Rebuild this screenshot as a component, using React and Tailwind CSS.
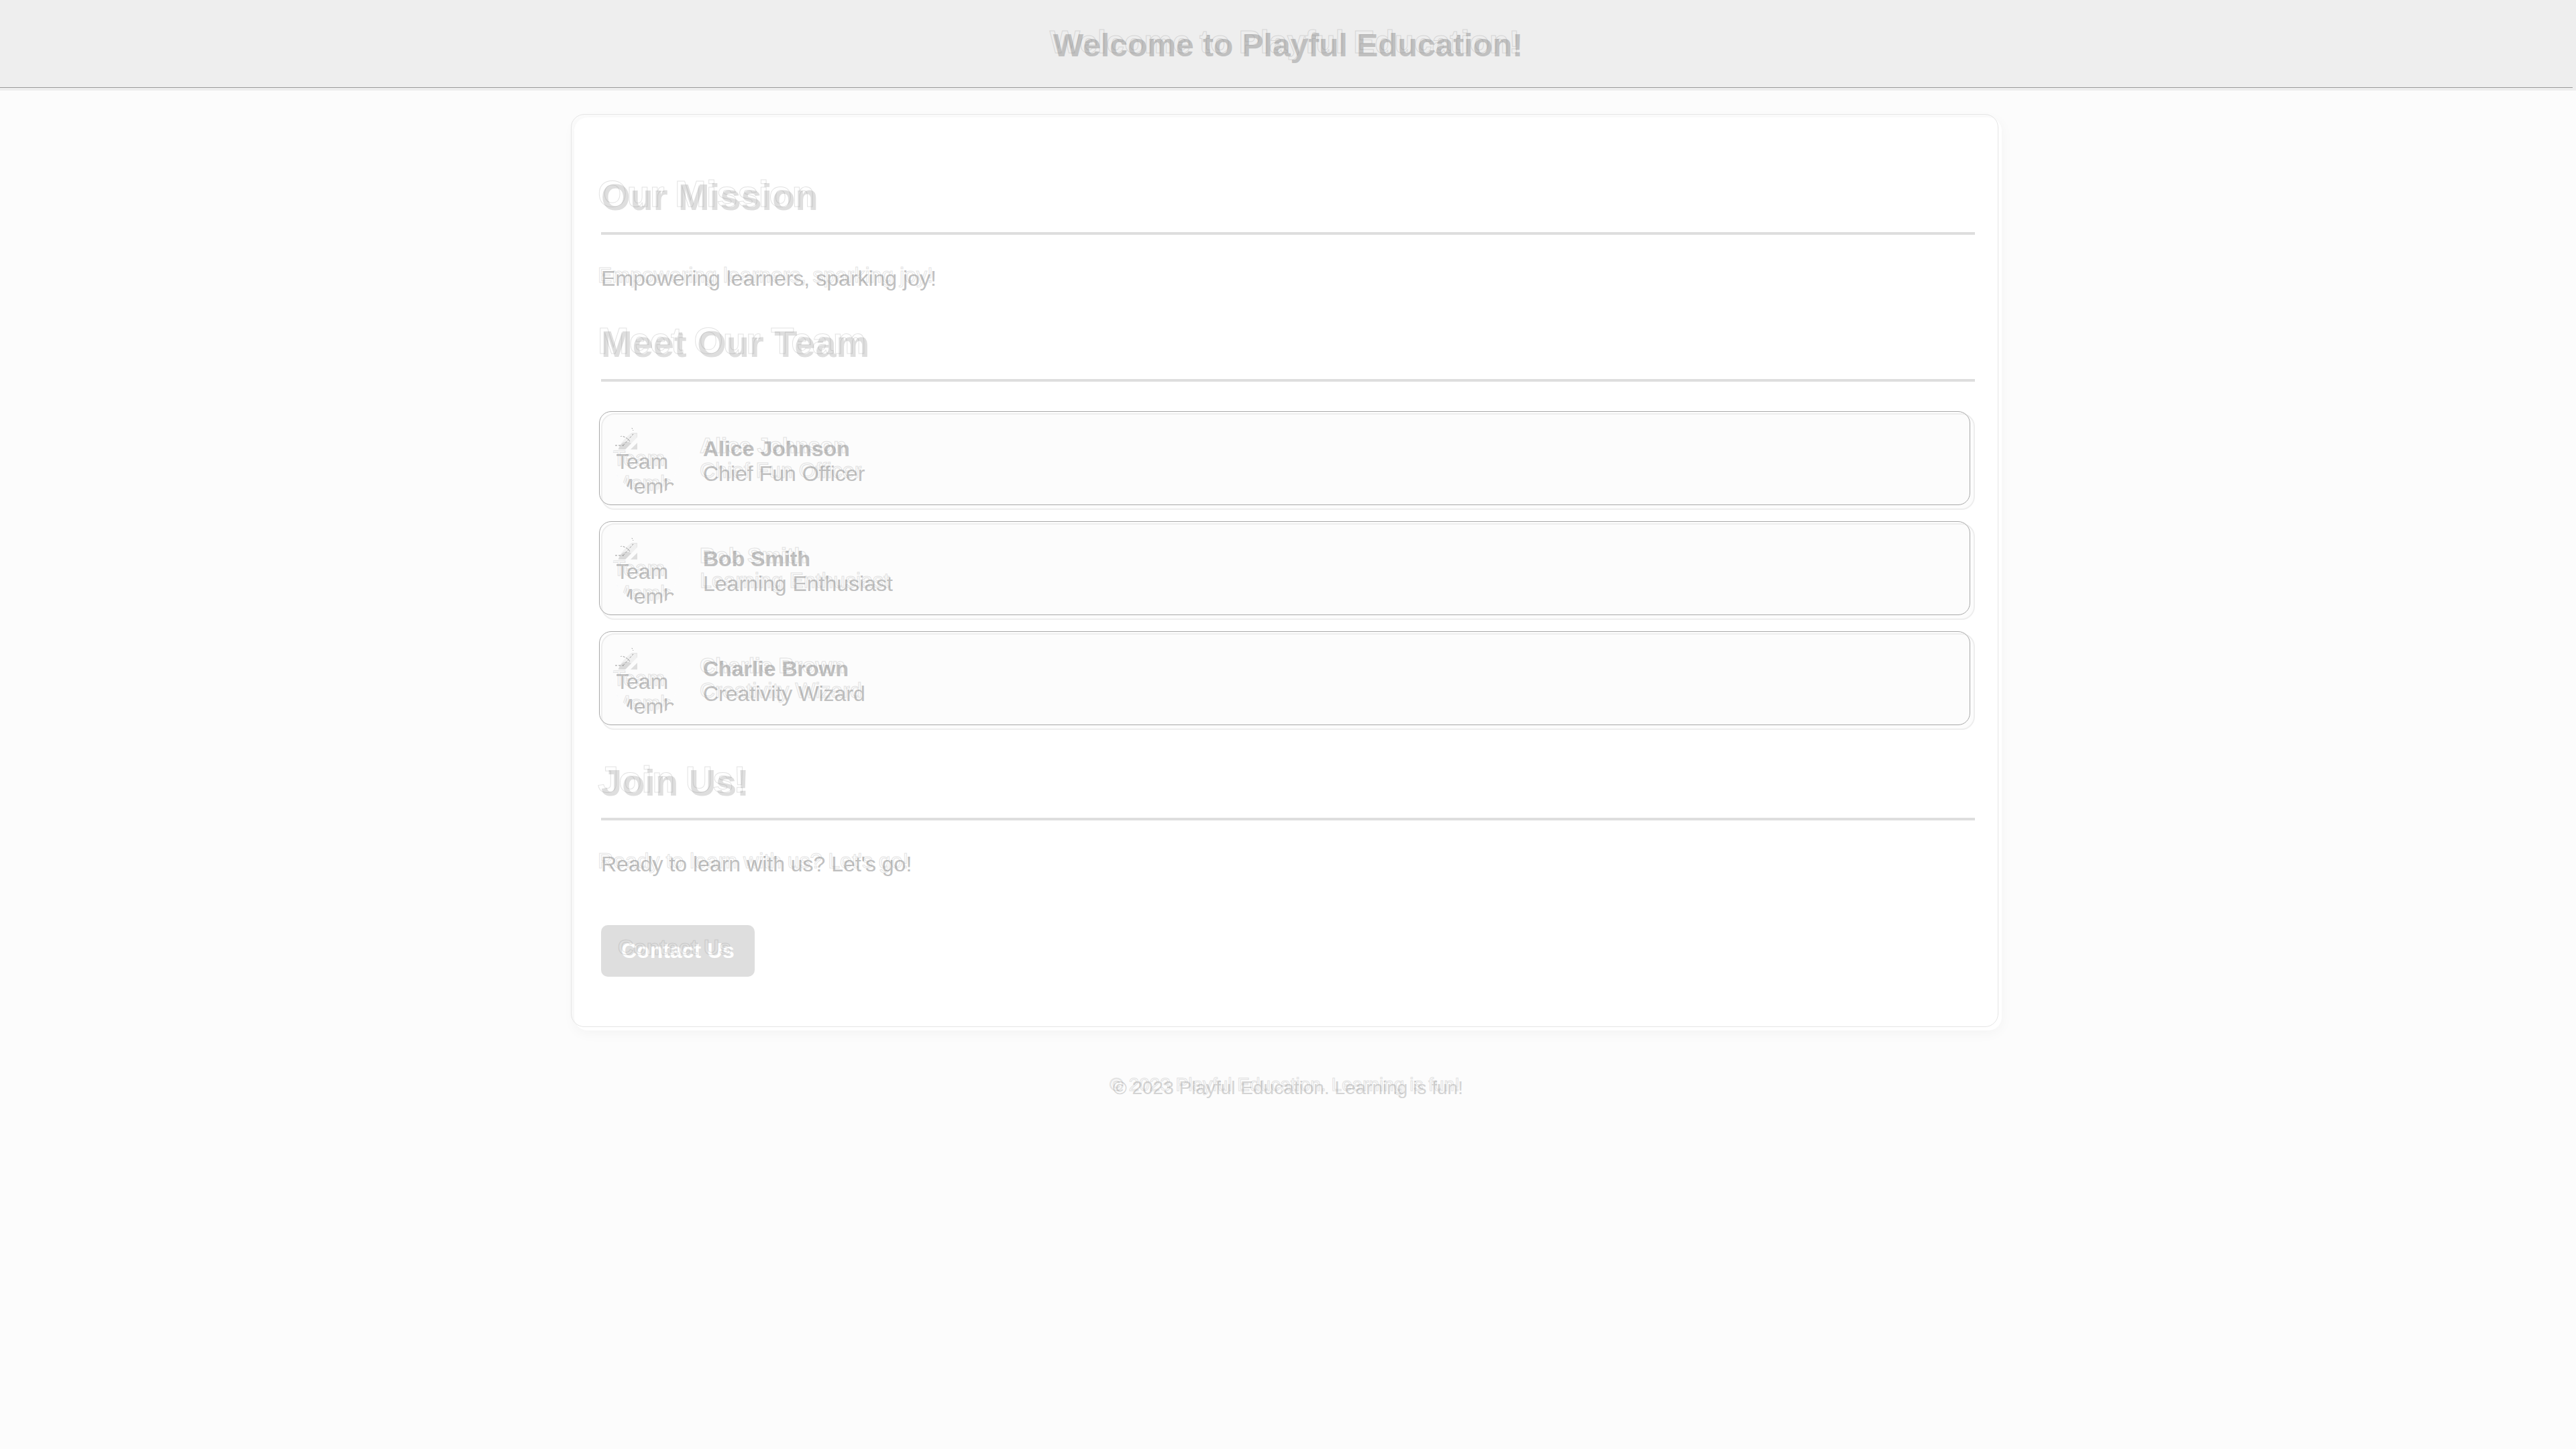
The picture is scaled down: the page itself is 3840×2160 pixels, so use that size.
const team = [
  { name: "Alice Johnson", role: "Chief Fun Officer" },
  { name: "Bob Smith", role: "Learning Enthusiast" },
  { name: "Charlie Brown", role: "Creativity Wizard" },
];

// Text with a faint engraved contour up and to the left of the letters.
function Etched({ children }) {
  return (
    <span
      data-etch={children}
      className="relative inline-block before:pointer-events-none before:absolute before:-left-[5px] before:-top-[5px] before:w-full before:text-transparent before:opacity-20 before:content-[attr(data-etch)] before:[-webkit-text-stroke:1px_#777777]"
    >
      {children}
    </span>
  );
}

function SectionTitle({ children }) {
  return (
    <h2 className="border-b-4 border-[#dedede] pb-5 text-[56px] font-bold leading-[64px] text-[#dedede]">
      <Etched>{children}</Etched>
    </h2>
  );
}

// Placeholder avatar: a torn-picture glyph over its label, clipped to a circle.
function Avatar() {
  return (
    <div className="relative size-[100px] shrink-0">
      <div role="img" aria-label="Team Member" className="size-full overflow-hidden rounded-full leading-[37px]">
        <svg viewBox="0 0 32 32" className="block size-8" aria-hidden="true">
          <path d="M0 8 H32 V14 L14 32 H0 Z" fill="#f0f0f0" />
          <path d="M4 32 C6 23 12 19 20 21 L23 23 L14 32 Z" fill="#d9d9d9" />
          <path d="M32 22 V32 H22 Z" fill="#dedede" />
          <path d="M20 8 H32 V14" fill="none" stroke="#dddddd" strokeWidth="1" />
        </svg>
        Team Member
      </div>
      <div
        aria-hidden="true"
        className="pointer-events-none absolute -left-[5px] -top-[5px] size-full overflow-hidden rounded-full leading-[37px]"
      >
        <svg viewBox="0 0 32 32" className="block size-8">
          <g fill="none" stroke="#999999" strokeWidth="1">
            <path d="M1 32 C4 19 13 9 25 2 L29 5 L31 9" strokeDasharray="2 2" />
            <path d="M6 19 C13 15 21 18 26 25 M4 31 H18 M16 31 L31 14" strokeDasharray="3 2" />
          </g>
        </svg>
        <div
          data-etch="Team Member"
          className="before:text-transparent before:opacity-20 before:content-[attr(data-etch)] before:[-webkit-text-stroke:1px_#777777]"
        />
      </div>
    </div>
  );
}

function Member({ name, role }) {
  return (
    <li className="relative flex items-center gap-[30px] rounded-[20px] border-2 border-[#eeeeee] bg-[#fcfcfc] p-5 before:pointer-events-none before:absolute before:-left-[5px] before:-top-[5px] before:h-full before:w-full before:rounded-[18px] before:border before:border-[#a8a8a8]">
      <Avatar />
      <div className="flex flex-col leading-[37px]">
        <strong className="font-bold">
          <Etched>{name}</Etched>
        </strong>
        <span>
          <Etched>{role}</Etched>
        </span>
      </div>
    </li>
  );
}

export default function App() {
  return (
    <div className="flex min-h-screen flex-col bg-[#fcfcfc] font-['Liberation_Sans',Arial,sans-serif] text-[32px] leading-[37px] text-[#c0c0c0]">
      <header className="relative bg-[#eeeeee] p-10 text-center before:absolute before:bottom-1 before:left-0 before:right-[5px] before:h-px before:bg-[#999999]">
        <h1 className="text-[48px] font-bold leading-[55px]">
          <Etched>Welcome to Playful Education!</Etched>
        </h1>
      </header>

      <main className="relative mx-auto mt-10 flex w-full max-w-[2128px] flex-col gap-[47px] rounded-[20px] bg-white px-10 pb-20 pt-[87px] shadow-[0_4px_20px_rgba(0,0,0,0.04)] before:pointer-events-none before:absolute before:-left-[5px] before:-top-[5px] before:h-full before:w-full before:rounded-[20px] before:border before:border-[#e5e5e5]">
        <SectionTitle>Our Mission</SectionTitle>
        <p>
          <Etched>Empowering learners, sparking joy!</Etched>
        </p>

        <SectionTitle>Meet Our Team</SectionTitle>
        <ul className="flex flex-col gap-5">
          {team.map((member) => (
            <Member key={member.name} {...member} />
          ))}
        </ul>

        <SectionTitle>Join Us!</SectionTitle>
        <div className="flex flex-col items-start gap-[72px]">
          <p>
            <Etched>Ready to learn with us? Let's go!</Etched>
          </p>
          <button type="button" className="rounded-[10px] bg-[#dedede] px-[30px] py-5 font-bold text-white">
            <Etched>Contact Us</Etched>
          </button>
        </div>
      </main>

      <footer className="mt-[70px] text-center text-[28px] leading-8 text-[#d4d4d4]">
        <Etched>© 2023 Playful Education. Learning is fun!</Etched>
      </footer>
    </div>
  );
}
